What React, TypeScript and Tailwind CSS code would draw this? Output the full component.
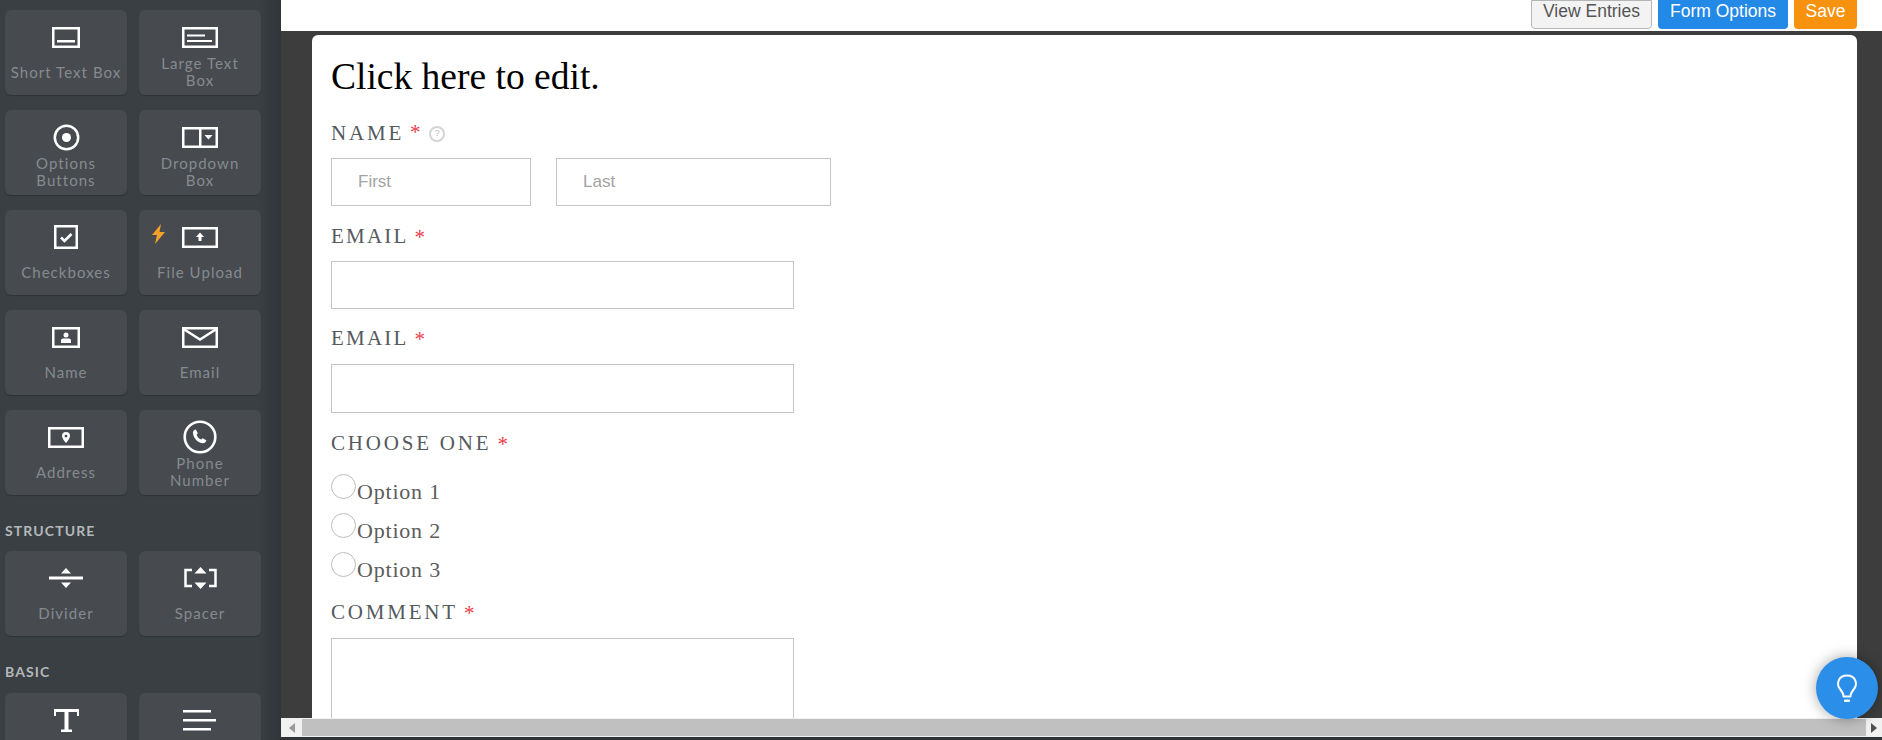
import type { ReactNode } from "react"

const W = "#ffffff"

function Svg({ w, h, children }: { w: number; h: number; children: ReactNode }) {
  return (
    <svg width={w} height={h} viewBox={`0 0 ${w} ${h}`} fill="none">
      {children}
    </svg>
  )
}

const Frame = ({ w, h = 21 }: { w: number; h?: number }) => (
  <rect x="1.25" y="1.25" width={w - 2.5} height={h - 2.5} stroke={W} strokeWidth="2.5" />
)

const icons: Record<string, ReactNode> = {
  short: (
    <Svg w={28} h={21}>
      <Frame w={28} />
      <rect x="5" y="13" width="18" height="2.5" fill={W} />
    </Svg>
  ),
  large: (
    <Svg w={36} h={21}>
      <Frame w={36} />
      <rect x="5" y="7.5" width="18" height="2" fill={W} />
      <rect x="5" y="13" width="25" height="2" fill={W} />
    </Svg>
  ),
  radio: (
    <Svg w={27} h={27}>
      <circle cx="13.5" cy="13.5" r="11.7" stroke={W} strokeWidth="2.5" />
      <circle cx="13.5" cy="13.5" r="4.5" fill={W} />
    </Svg>
  ),
  dropdown: (
    <Svg w={36} h={21}>
      <Frame w={36} />
      <rect x="17" y="1" width="2.5" height="19" fill={W} />
      <path d="M22.5 8h8l-4 4.5z" fill={W} />
    </Svg>
  ),
  check: (
    <Svg w={24} h={24}>
      <Frame w={24} h={24} />
      <path d="M7 12.5l3.5 3.5 7-7" stroke={W} strokeWidth="2.6" />
    </Svg>
  ),
  upload: (
    <Svg w={36} h={21}>
      <Frame w={36} />
      <path d="M18 5.5l4 4.5h-2.5v4h-3v-4H14z" fill={W} />
    </Svg>
  ),
  name: (
    <Svg w={28} h={21}>
      <Frame w={28} />
      <circle cx="14" cy="8" r="2.5" fill={W} />
      <path d="M9 16v-2.5q0-2 2-2h6q2 0 2 2V16z" fill={W} />
    </Svg>
  ),
  email: (
    <Svg w={36} h={21}>
      <Frame w={36} />
      <path d="M1.5 2L18 12.5 34.5 2" stroke={W} strokeWidth="2.5" />
    </Svg>
  ),
  address: (
    <Svg w={36} h={21}>
      <Frame w={36} />
      <path
        fillRule="evenodd"
        d="M18 5a4 4 0 0 1 4 4c0 2.5-2.5 5-4 7-1.500-2-4-4.500-4-7a4 4 0 0 1 4-4zm0 2.700a1.400 1.400 0 1 0 0 2.800 1.400 1.400 0 0 0 0-2.800z"
        fill={W}
      />
    </Svg>
  ),
  phone: (
    <Svg w={34} h={34}>
      <circle cx="17" cy="17" r="15.300" stroke={W} strokeWidth="2.600" />
      <path
        d="M12.800 9.500l2 3.800-1.200 1.500c.8 2.300 2.300 3.800 4.500 4.700l1.500-1.300 3.800 2.100c-.5 2.300-2.300 3.300-4 3-5.200-1-8.900-5-9.400-10.200-.1-1.800 1-3.200 2.300-3.600z"
        fill={W}
      />
    </Svg>
  ),
  divider: (
    <Svg w={34} h={22}>
      <rect x="0" y="9.500" width="34" height="3" fill={W} />
      <path d="M17 1l5 5.500H12zM17 21l-5-5.500h10z" fill={W} />
    </Svg>
  ),
  spacer: (
    <Svg w={33} h={24}>
      <path d="M8 4H1.500v16H8M25 4h6.500v16H25" stroke={W} strokeWidth="2.500" />
      <path d="M16.500 1l6 6.500h-12zM16.500 23l-6-6.500h12z" fill={W} />
    </Svg>
  ),
  text: (
    <Svg w={25} h={23}>
      <path
        d="M0 0h25v7h-2V3h-8.500v17.500H18V23H7v-2.500h3.500V3H2v4H0z"
        fill={W}
      />
    </Svg>
  ),
  paragraph: (
    <Svg w={34} h={21}>
      <rect x="0" y="0" width="28" height="2.500" fill={W} />
      <rect x="0" y="9" width="33" height="2.500" fill={W} />
      <rect x="0" y="18" width="28" height="2.500" fill={W} />
    </Svg>
  ),
}

function Tile({ icon, label, bolt }: { icon: string; label?: string; bolt?: boolean }) {
  return (
    <div className="relative h-[85px] shrink-0 rounded-[6px] bg-[#474b50] pt-[10px] shadow-[0_1px_1px_rgba(0,0,0,0.2)]">
      {bolt && (
        <svg className="absolute left-[13px] top-[14px]" width="14" height="20" viewBox="0 0 14 20">
          <path d="M9 0L0 11h5l-2 9 10-12H7.500z" fill="#f5a02a" />
        </svg>
      )}
      <div className="flex h-[34px] items-center justify-center">{icons[icon]}</div>
      <div className="mt-[1px] flex h-[34px] items-center justify-center whitespace-pre-line text-center font-['Lato',sans-serif] text-[15px] leading-[17px] tracking-[1.05px] text-[#858a8e]">
        {label}
      </div>
    </div>
  )
}

function SectionTitle({ children, className }: { children: ReactNode; className: string }) {
  return (
    <div className={`flex items-center pt-[14px] font-['Lato',sans-serif] text-[14px] font-bold tracking-[1.1px] text-[#b5b8ba] ${className}`}>
      {children}
    </div>
  )
}

function Sidebar() {
  return (
    <aside className="h-[740px] w-[281px] shrink-0 overflow-hidden bg-gradient-to-r from-[#393f42] from-[92%] to-[#31353a] pl-[5px] pr-[20px] pt-[10px]">
      <div className="grid grid-cols-2 gap-x-[12px] gap-y-[15px]">
        <Tile icon="short" label="Short Text Box" />
        <Tile icon="large" label={"Large Text\nBox"} />
        <Tile icon="radio" label={"Options\nButtons"} />
        <Tile icon="dropdown" label={"Dropdown\nBox"} />
        <Tile icon="check" label="Checkboxes" />
        <Tile icon="upload" label="File Upload" bolt />
        <Tile icon="name" label="Name" />
        <Tile icon="email" label="Email" />
        <Tile icon="address" label="Address" />
        <Tile icon="phone" label={"Phone\nNumber"} />
      </div>
      <SectionTitle className="h-[56px]">STRUCTURE</SectionTitle>
      <div className="grid grid-cols-2 gap-x-[12px]">
        <Tile icon="divider" label="Divider" />
        <Tile icon="spacer" label="Spacer" />
      </div>
      <SectionTitle className="h-[57px]">BASIC</SectionTitle>
      <div className="grid grid-cols-2 gap-x-[12px]">
        <Tile icon="text" />
        <Tile icon="paragraph" />
      </div>
    </aside>
  )
}

function FieldLabel({ children, help, className }: { children: ReactNode; help?: boolean; className: string }) {
  return (
    <div className={`flex items-center pt-[2px] font-['Liberation_Serif',serif] text-[21px] tracking-[2.8px] text-[#555a5e] ${className}`}>
      <span>{children}</span>
      <span className="ml-[6px] self-start text-[#e8404a]">*</span>
      {help && (
        <span className="ml-[6px] mt-[1px] flex h-[16px] w-[16px] items-center justify-center rounded-full border-2 border-[#d4d4d4] font-['Liberation_Sans',sans-serif] text-[9px] tracking-normal text-[#bbbbbb]">
          ?
        </span>
      )}
    </div>
  )
}

const inputBox = "block h-[48px] border border-[#c4c4c4] bg-white font-['Liberation_Sans',sans-serif] text-[17px] outline-none placeholder:text-[#a3a3a3]"

function Option({ children }: { children: ReactNode }) {
  return (
    <div className="flex h-[39px] items-start">
      <span className="h-[25px] w-[25px] shrink-0 rounded-full border border-[#bdbdbd] bg-white" />
      <span className="ml-[1px] mt-[3px] font-['Liberation_Serif',serif] text-[22px] leading-[30px] tracking-[0.8px] text-[#5c5c5c]">
        {children}
      </span>
    </div>
  )
}

function Form() {
  return (
    <div className="min-h-0 flex-1 overflow-hidden rounded-t-[6px] bg-white pl-[19px]">
      <h1 className="h-[80px] pt-[18px] font-['Liberation_Serif',serif] text-[37.5px] leading-[48px] text-black">
        Click here to edit.
      </h1>
      <FieldLabel help className="mb-[8px] h-[35px]">NAME</FieldLabel>
      <div className="flex gap-[25px]">
        <input className={`${inputBox} w-[200px] pl-[26px]`} placeholder="First" />
        <input className={`${inputBox} w-[275px] pl-[26px]`} placeholder="Last" />
      </div>
      <FieldLabel className="mb-[9px] mt-[14px] h-[32px]">
        <span className="tracking-[2.2px]">EMAIL</span>
      </FieldLabel>
      <input className={`${inputBox} w-[463px]`} />
      <FieldLabel className="mb-[10px] mt-[13px] h-[32px]">
        <span className="tracking-[2.2px]">EMAIL</span>
      </FieldLabel>
      <input className={`${inputBox} h-[49px] w-[463px]`} />
      <FieldLabel className="mb-[15px] mt-[14px] h-[32px]">CHOOSE ONE</FieldLabel>
      <div>
        <Option>Option 1</Option>
        <Option>Option 2</Option>
        <Option>Option 3</Option>
      </div>
      <FieldLabel className="mb-[10px] mt-[5px] h-[32px]">COMMENT</FieldLabel>
      <div className="h-[100px] w-[463px] border border-[#c4c4c4]" />
    </div>
  )
}

function ScrollBar() {
  return (
    <div className="shrink-0">
      <div className="flex h-[19px] items-stretch bg-[#f1f1f1]">
        <div className="flex w-[21px] items-center justify-center">
          <span className="h-0 w-0 border-y-[5px] border-r-[6px] border-y-transparent border-r-[#9a9a9a]" />
        </div>
        <div className="my-[1px] flex-1 bg-[#c0c0c0]" />
        <div className="flex w-[16px] items-center justify-center">
          <span className="h-0 w-0 border-y-[5px] border-l-[6px] border-y-transparent border-l-[#505050]" />
        </div>
      </div>
      <div className="h-[3px] bg-[#2e3437]" />
    </div>
  )
}

export default function App() {
  return (
    <div className="relative flex h-[740px] w-[1882px] overflow-hidden">
      <Sidebar />
      <main className="flex min-w-0 flex-1 flex-col bg-[#3d3d3d]">
        <div className="flex h-[31px] shrink-0 items-start justify-end gap-[6px] bg-white pr-[25px] font-['Liberation_Sans',sans-serif] text-[17.5px]">
          <button className="flex h-[29px] w-[121px] items-center justify-center rounded-b-[4px] border border-[#b5b5b5] bg-[#f3f3f3] pb-[6px] text-[#555555]">
            View Entries
          </button>
          <button className="flex h-[29px] w-[130px] items-center justify-center rounded-b-[4px] bg-[#2389e6] pb-[6px] text-white">
            Form Options
          </button>
          <button className="flex h-[29px] w-[63px] items-center justify-center rounded-b-[4px] bg-[#f7920f] pb-[6px] text-white">
            Save
          </button>
        </div>
        <div className="flex min-h-0 flex-1 flex-col pl-[31px] pr-[25px] pt-[4px]">
          <Form />
        </div>
        <ScrollBar />
      </main>
      <button className="absolute left-[1816px] top-[657px] flex h-[62px] w-[62px] items-center justify-center rounded-full bg-[#2b8ee8] text-white shadow-[0_0_14px_rgba(0,0,0,0.35)]">
        <svg width="22" height="29" viewBox="0 0 22 29" fill="none">
          <path
            d="M7.500 22.500c0-3-1-4.500-3.500-7.500C.5 11 1.500 1.500 11 1.500S21.500 11 18 15c-2.500 3-3.500 4.500-3.500 7.500z"
            stroke={W}
            strokeWidth="2"
            strokeLinejoin="round"
          />
          <rect x="8" y="25.500" width="6" height="2.500" rx="1" fill={W} />
        </svg>
      </button>
    </div>
  )
}
